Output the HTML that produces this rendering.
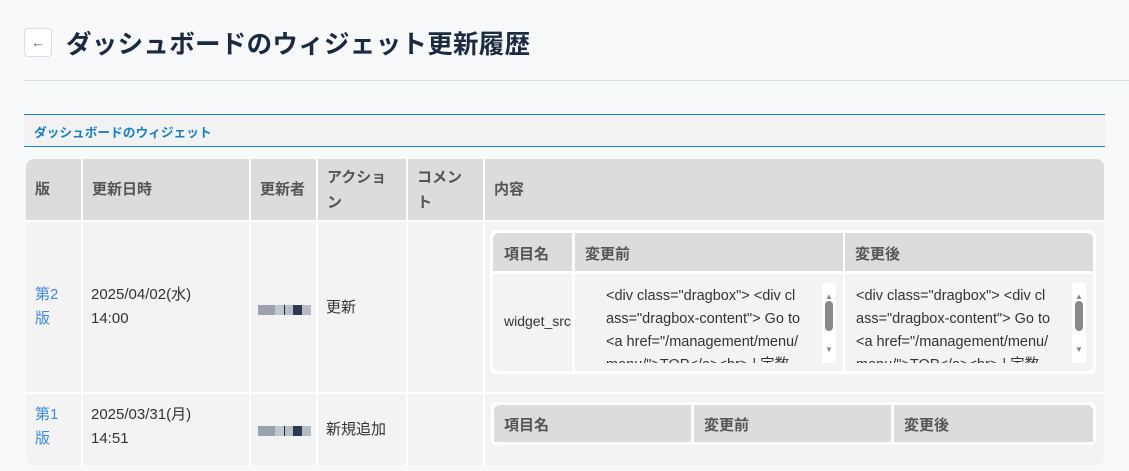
<!DOCTYPE html>
<html><head><meta charset="utf-8"><style>
*{box-sizing:border-box;margin:0;padding:0}
body{width:1129px;height:471px;background:#f8f9fb;font-family:"Liberation Sans","Noto Sans CJK JP",sans-serif;position:relative;overflow:hidden;color:#333}
.abs{position:absolute}
.back{left:24px;top:28px;width:28px;height:29px;border:1px solid #d8dee6;border-radius:4px;background:#fff;color:#4a5568;font-size:13px;text-align:center;line-height:27px}
h1{position:absolute;left:66px;top:24px;font-size:25.5px;font-weight:bold;color:#1b2a40;letter-spacing:0.3px}
.hr{left:24px;top:80px;width:1105px;height:1px;background:#d6dee7}
.sec{left:24px;top:114px;width:1081px;height:33px;border-top:1px solid #1a84c6;border-bottom:1px solid #1a84c6;background:#f2f2f2;font-size:12.7px;font-weight:bold;color:#1a7fc1;padding:7px 0 0 10px}
.c{position:absolute;font-size:15px}
.h{background:#dcdcdc;color:#555;font-weight:bold}
.b{background:#f3f3f3}
.lnk{color:#3d8ae0;line-height:24px}
.ta{position:absolute;background:#f3f3f3;font-size:14.5px;line-height:23px;color:#333;overflow:hidden;padding:2px 0 0 6px;white-space:nowrap}
.sb{position:absolute;right:0;top:0;width:14px;height:100%;background:#fff}
.th{position:absolute;left:3px;top:18px;width:8px;height:30px;border-radius:4px;background:#8a8a8a}
.ar{position:absolute;left:3px;font-size:8px;color:#888}
</style></head><body>
<div class="abs back">←</div>
<h1>ダッシュボードのウィジェット更新履歴</h1>
<div class="abs hr"></div>
<div class="abs sec">ダッシュボードのウィジェット</div>

<div class="abs" style="left:26px;top:159px;width:1078px;height:306px;background:#fff;border-radius:8px;overflow:hidden">
 <div class="c h" style="left:0;top:0;width:55px;height:61px;padding:19px 0 0 9px">版</div>
 <div class="c h" style="left:57px;top:0;width:166px;height:61px;padding:19px 0 0 9px">更新日時</div>
 <div class="c h" style="left:225px;top:0;width:65px;height:61px;padding:19px 0 0 9px">更新者</div>
 <div class="c h" style="left:292px;top:0;width:88px;height:61px;padding:6px 0 0 9px;line-height:25px">アクショ<br>ン</div>
 <div class="c h" style="left:382px;top:0;width:75px;height:61px;padding:6px 0 0 9px;line-height:25px">コメン<br>ト</div>
 <div class="c h" style="left:459px;top:0;width:619px;height:61px;padding:19px 0 0 9px">内容</div>

 <div class="c b lnk" style="left:0;top:63px;width:55px;height:170px;padding:61px 0 0 9px">第2<br>版</div>
 <div class="c b" style="left:57px;top:63px;width:166px;height:170px;padding:61px 0 0 8px;line-height:24px">2025/04/02(水)<br>14:00</div>
 <div class="c b" style="left:225px;top:63px;width:65px;height:170px"><div style="position:absolute;left:7px;top:83px;width:53px;height:10px;background:linear-gradient(90deg,#9aa3ad 0 17px,#c3c8cf 17px 26px,#1e2a3d 26px 27px,#b8bec6 27px 35px,#2b3a52 35px 44px,#b5bbc3 44px)"></div></div>
 <div class="c b" style="left:292px;top:63px;width:88px;height:170px;padding:74px 0 0 8px">更新</div>
 <div class="c b" style="left:382px;top:63px;width:75px;height:170px"></div>
 <div class="c b" style="left:459px;top:63px;width:619px;height:170px"></div>

 <div class="c b lnk" style="left:0;top:235px;width:55px;height:71px;padding:9px 0 0 9px">第1<br>版</div>
 <div class="c b" style="left:57px;top:235px;width:166px;height:71px;padding:9px 0 0 8px;line-height:24px">2025/03/31(月)<br>14:51</div>
 <div class="c b" style="left:225px;top:235px;width:65px;height:71px"><div style="position:absolute;left:7px;top:32px;width:53px;height:10px;background:linear-gradient(90deg,#9aa3ad 0 17px,#c3c8cf 17px 26px,#1e2a3d 26px 27px,#b8bec6 27px 35px,#2b3a52 35px 44px,#b5bbc3 44px)"></div></div>
 <div class="c b" style="left:292px;top:235px;width:88px;height:71px;padding:24px 0 0 8px">新規追加</div>
 <div class="c b" style="left:382px;top:235px;width:75px;height:71px"></div>
 <div class="c b" style="left:459px;top:235px;width:619px;height:71px"></div>
</div>

<div class="abs" style="left:490px;top:230px;width:606px;height:144px;background:#fff;border-radius:6px"></div>
<div class="c h" style="left:493px;top:233px;width:79px;height:38px;padding:10px 0 0 11px;border-top-left-radius:6px">項目名</div>
<div class="c h" style="left:575px;top:233px;width:268px;height:38px;padding:10px 0 0 10px">変更前</div>
<div class="c h" style="left:845px;top:233px;width:248px;height:38px;padding:10px 0 0 10px;border-top-right-radius:6px">変更後</div>
<div class="c b" style="left:493px;top:274px;width:79px;height:97px;padding:39px 0 0 11px;font-size:14px;border-bottom-left-radius:6px;overflow:hidden;white-space:nowrap">widget_src</div>
<div class="c b" style="left:575px;top:274px;width:268px;height:97px"></div>
<div class="c b" style="left:845px;top:274px;width:248px;height:97px;border-bottom-right-radius:6px"></div>
<div class="ta" style="left:600px;top:283px;width:236px;height:80px">&lt;div class="dragbox"&gt; &lt;div cl<br>ass="dragbox-content"&gt; Go to<br>&lt;a href="/management/menu/<br>menu/"&gt;TOP&lt;/a&gt;&lt;br&gt; | 定数<div class="sb"><span class="ar" style="top:2px">▲</span><div class="th"></div><span class="ar" style="bottom:2px">▼</span></div></div>
<div class="ta" style="left:850px;top:283px;width:236px;height:80px">&lt;div class="dragbox"&gt; &lt;div cl<br>ass="dragbox-content"&gt; Go to<br>&lt;a href="/management/menu/<br>menu/"&gt;TOP&lt;/a&gt;&lt;br&gt; | 定数<div class="sb"><span class="ar" style="top:2px">▲</span><div class="th"></div><span class="ar" style="bottom:2px">▼</span></div></div>

<div class="abs" style="left:491px;top:402px;width:605px;height:43px;background:#fff;border-radius:6px"></div>
<div class="c h" style="left:494px;top:405px;width:197px;height:37px;padding:9px 0 0 10px;border-top-left-radius:6px">項目名</div>
<div class="c h" style="left:694px;top:405px;width:197px;height:37px;padding:9px 0 0 10px">変更前</div>
<div class="c h" style="left:894px;top:405px;width:199px;height:37px;padding:9px 0 0 10px;border-top-right-radius:6px">変更後</div>
</body></html>
